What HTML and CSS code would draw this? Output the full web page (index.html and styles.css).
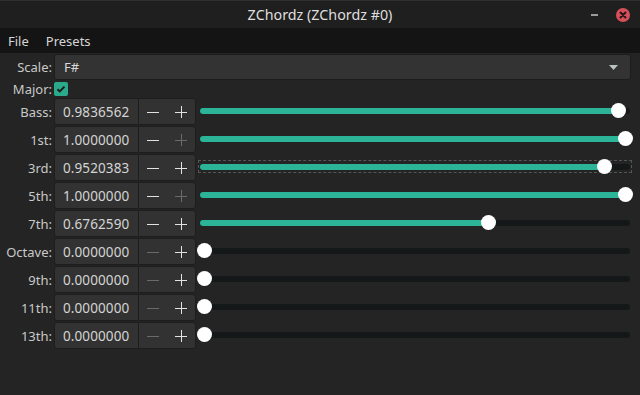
FILE: index.html
```html
<!DOCTYPE html>
<html>
<head>
<meta charset="utf-8">
<link rel="stylesheet" href="styles.css">
</head>
<body>
<div class="window">
  <header class="titlebar">
    <div class="tb-side"></div>
    <div class="title">ZChordz (ZChordz #0)</div>
    <div class="tb-side controls">
      <span class="minimize"></span>
      <span class="close"><svg width="14" height="14" viewBox="0 0 14 14"><path d="M4.5 4.5L9.5 9.5M9.5 4.5L4.5 9.5" stroke="#2a1416" stroke-width="2" stroke-linecap="round"/></svg></span>
    </div>
  </header>
  <nav class="menubar">
    <span class="menu">File</span>
    <span class="menu">Presets</span>
  </nav>
  <main class="content">
    <div class="row scale-row">
      <label class="lbl">Scale:</label>
      <div class="combo"><span>F#</span><svg class="arrow" width="9" height="5" viewBox="0 0 9 5"><path d="M0 0H9L4.5 5Z" fill="#b9c4c1"/></svg></div>
    </div>
    <div class="row major-row">
      <label class="lbl">Major:</label>
      <span class="check"><svg width="14" height="14" viewBox="0 0 14 14"><path d="M3.5 7.2L5.8 9.4L10.5 4.6" fill="none" stroke="#1b1b1b" stroke-width="2"/></svg></span>
    </div>

    <div class="row srow">
      <label class="lbl">Bass:</label>
      <div class="spin"><span class="entry">0.9836562</span><span class="btn"><svg width="12" height="12" viewBox="0 0 12 12"><path d="M0 6.5H12" stroke="currentColor"/></svg></span><span class="btn"><svg width="12" height="12" viewBox="0 0 12 12"><path d="M0 6.5H12M6.5 0V12" stroke="currentColor"/></svg></span></div>
      <div class="slider"><div class="track"><div class="fill" style="--v:0.9836562"></div><div class="knob" style="--v:0.9836562"></div></div></div>
    </div>
    <div class="row srow">
      <label class="lbl">1st:</label>
      <div class="spin"><span class="entry">1.0000000</span><span class="btn"><svg width="12" height="12" viewBox="0 0 12 12"><path d="M0 6.5H12" stroke="currentColor"/></svg></span><span class="btn off"><svg width="12" height="12" viewBox="0 0 12 12"><path d="M0 6.5H12M6.5 0V12" stroke="currentColor"/></svg></span></div>
      <div class="slider"><div class="track"><div class="fill" style="--v:1"></div><div class="knob" style="--v:1"></div></div></div>
    </div>
    <div class="row srow">
      <label class="lbl">3rd:</label>
      <div class="spin"><span class="entry">0.9520383</span><span class="btn"><svg width="12" height="12" viewBox="0 0 12 12"><path d="M0 6.5H12" stroke="currentColor"/></svg></span><span class="btn"><svg width="12" height="12" viewBox="0 0 12 12"><path d="M0 6.5H12M6.5 0V12" stroke="currentColor"/></svg></span></div>
      <div class="slider focused"><div class="track"><div class="fill" style="--v:0.9520383"></div><div class="knob" style="--v:0.9520383"></div></div></div>
    </div>
    <div class="row srow">
      <label class="lbl">5th:</label>
      <div class="spin"><span class="entry">1.0000000</span><span class="btn"><svg width="12" height="12" viewBox="0 0 12 12"><path d="M0 6.5H12" stroke="currentColor"/></svg></span><span class="btn off"><svg width="12" height="12" viewBox="0 0 12 12"><path d="M0 6.5H12M6.5 0V12" stroke="currentColor"/></svg></span></div>
      <div class="slider"><div class="track"><div class="fill" style="--v:1"></div><div class="knob" style="--v:1"></div></div></div>
    </div>
    <div class="row srow">
      <label class="lbl">7th:</label>
      <div class="spin"><span class="entry">0.6762590</span><span class="btn"><svg width="12" height="12" viewBox="0 0 12 12"><path d="M0 6.5H12" stroke="currentColor"/></svg></span><span class="btn"><svg width="12" height="12" viewBox="0 0 12 12"><path d="M0 6.5H12M6.5 0V12" stroke="currentColor"/></svg></span></div>
      <div class="slider"><div class="track"><div class="fill" style="--v:0.6762590"></div><div class="knob" style="--v:0.6762590"></div></div></div>
    </div>
    <div class="row srow">
      <label class="lbl">Octave:</label>
      <div class="spin"><span class="entry">0.0000000</span><span class="btn off"><svg width="12" height="12" viewBox="0 0 12 12"><path d="M0 6.5H12" stroke="currentColor"/></svg></span><span class="btn"><svg width="12" height="12" viewBox="0 0 12 12"><path d="M0 6.5H12M6.5 0V12" stroke="currentColor"/></svg></span></div>
      <div class="slider"><div class="track"><div class="fill" style="--v:0"></div><div class="knob" style="--v:0"></div></div></div>
    </div>
    <div class="row srow">
      <label class="lbl">9th:</label>
      <div class="spin"><span class="entry">0.0000000</span><span class="btn off"><svg width="12" height="12" viewBox="0 0 12 12"><path d="M0 6.5H12" stroke="currentColor"/></svg></span><span class="btn"><svg width="12" height="12" viewBox="0 0 12 12"><path d="M0 6.5H12M6.5 0V12" stroke="currentColor"/></svg></span></div>
      <div class="slider"><div class="track"><div class="fill" style="--v:0"></div><div class="knob" style="--v:0"></div></div></div>
    </div>
    <div class="row srow">
      <label class="lbl">11th:</label>
      <div class="spin"><span class="entry">0.0000000</span><span class="btn off"><svg width="12" height="12" viewBox="0 0 12 12"><path d="M0 6.5H12" stroke="currentColor"/></svg></span><span class="btn"><svg width="12" height="12" viewBox="0 0 12 12"><path d="M0 6.5H12M6.5 0V12" stroke="currentColor"/></svg></span></div>
      <div class="slider"><div class="track"><div class="fill" style="--v:0"></div><div class="knob" style="--v:0"></div></div></div>
    </div>
    <div class="row srow">
      <label class="lbl">13th:</label>
      <div class="spin"><span class="entry">0.0000000</span><span class="btn off"><svg width="12" height="12" viewBox="0 0 12 12"><path d="M0 6.5H12" stroke="currentColor"/></svg></span><span class="btn"><svg width="12" height="12" viewBox="0 0 12 12"><path d="M0 6.5H12M6.5 0V12" stroke="currentColor"/></svg></span></div>
      <div class="slider"><div class="track"><div class="fill" style="--v:0"></div><div class="knob" style="--v:0"></div></div></div>
    </div>
  </main>
</div>
</body>
</html>
```

FILE: styles.css
```css
* { box-sizing: border-box; }
html, body { margin: 0; padding: 0; }
body {
  width: 640px;
  height: 395px;
  overflow: hidden;
  background: #242424;
  font-family: "Noto Sans", "DejaVu Sans", sans-serif;
  font-size: 13px;
  color: #d2d2d2;
}
.window { width: 640px; height: 395px; display: flex; flex-direction: column; background: #242424; }

.titlebar {
  height: 28px;
  flex: none;
  display: grid;
  grid-template-columns: 1fr auto 1fr;
  align-items: center;
  background: #1f1f1f;
  border-top: 1px solid #303030;
}
.title { font-size: 14.3px; color: #dedede; }
.controls { display: flex; justify-content: flex-end; align-items: center; gap: 18px; padding-right: 10px; }
.minimize { width: 7px; height: 2px; background: #9a9a9a; }
.close { width: 14px; height: 14px; border-radius: 50%; background: #d6505b; display: flex; }

.menubar {
  height: 25px;
  flex: none;
  display: flex;
  align-items: center;
  background: #141414;
  padding-left: 8px;
  gap: 17px;
  color: #d6d6d6;
}

.content { padding-top: 1px; display: flex; flex-direction: column; }
.row { display: flex; align-items: center; }
.lbl { width: 52px; text-align: right; flex: none; margin-right: 2px; color: #c9c9c9; }

.scale-row { height: 26px; }
.combo {
  width: 577px;
  height: 26px;
  background: #333333;
  border: 1px solid #1c1c1c;
  border-radius: 3px;
  display: flex;
  align-items: center;
  justify-content: space-between;
  padding: 0 12px 0 9px;
  color: #d8d8d8;
}
.arrow { margin-top: 1px; }

.major-row { height: 18px; }
.check {
  width: 14px; height: 14px;
  background: #2aa98b;
  border-radius: 2px;
  display: flex;
}

.srow { height: 27px; margin-bottom: 1px; }
.spin {
  display: flex;
  height: 27px;
  border: 1px solid #1d1d1d;
  border-radius: 3px;
  background: #323232;
  overflow: hidden;
  flex: none;
}
.entry {
  width: 84px;
  padding-left: 8px;
  display: flex;
  align-items: center;
  border-right: 1px solid #1e1e1e;
  color: #d4d4d4;
  font-size: 13.5px;
  letter-spacing: 0.1px;
}
.btn {
  width: 28px;
  display: flex;
  align-items: center;
  justify-content: center;
  color: #e2e2e2;
}
.btn.off { color: #6a6a6a; }

.slider {
  margin-left: 4px;
  flex: 1;
  margin-right: 10px;
  margin-bottom: 2px;
  height: 15px;
  display: flex;
  align-items: center;
}
.slider.focused { outline: 1px dashed #555; outline-offset: -1px; padding: 0 2px; margin-left: 2px; margin-right: 8px; height: 13px; }
.track {
  position: relative;
  width: 100%;
  height: 6px;
  border-radius: 3px;
  background: #141818;
}
.fill {
  position: absolute;
  left: 0; top: 0; bottom: 0;
  width: calc(4px + var(--v) * 421px);
  border-radius: 3px;
  background: #2bb497;
}
.knob {
  position: absolute;
  top: -4.5px;
  left: calc(-3.5px + var(--v) * 421px);
  width: 15px;
  height: 15px;
  border-radius: 50%;
  background: #ffffff;
}
```
